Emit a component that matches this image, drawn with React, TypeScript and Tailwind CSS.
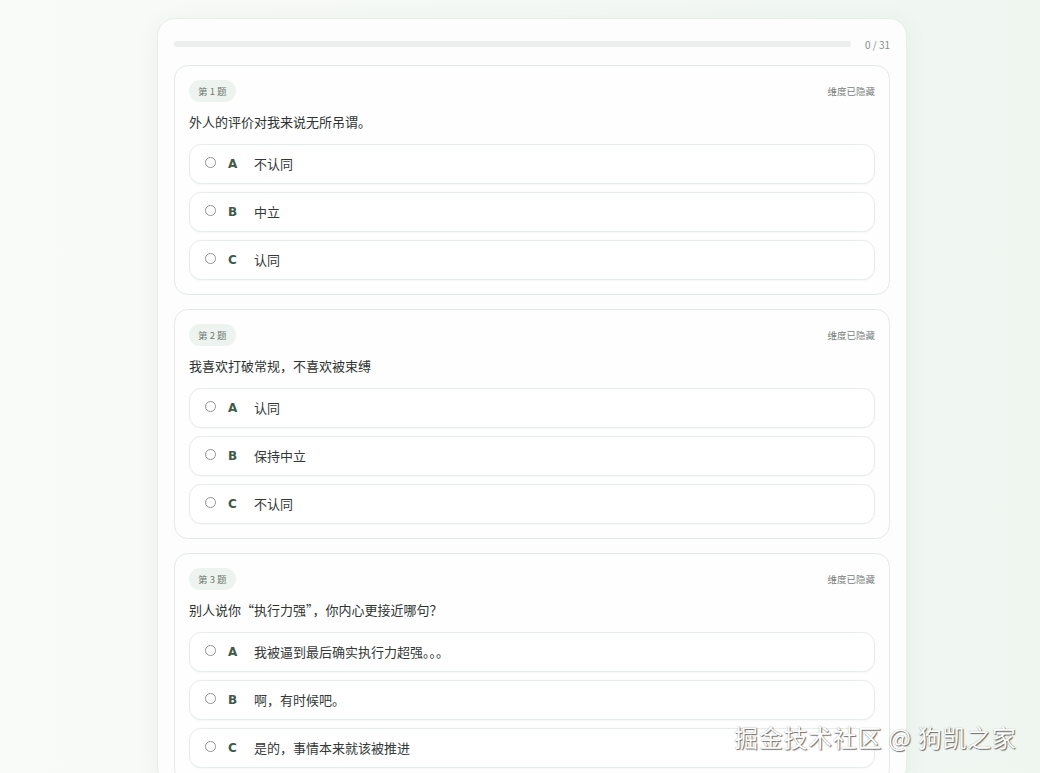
import React from "react";

type Q = { no: number; text: string; options: string[] };

const questions: Q[] = [
  { no: 1, text: "外人的评价对我来说无所吊谓。", options: ["不认同", "中立", "认同"] },
  { no: 2, text: "我喜欢打破常规，不喜欢被束缚", options: ["认同", "保持中立", "不认同"] },
  {
    no: 3,
    text: "别人说你“执行力强”，你内心更接近哪句？",
    options: ["我被逼到最后确实执行力超强。。。", "啊，有时候吧。", "是的，事情本来就该被推进"],
  },
];

const letters = ["A", "B", "C"];

function Option({ letter, text }: { letter: string; text: string }) {
  return (
    <div className="flex h-[40px] items-center rounded-[12px] border border-[#e6ece7] bg-white pl-[15px] shadow-[0_1px_2px_rgba(0,0,0,0.03)]">
      <span className="mb-[3px] h-[11px] w-[11px] rounded-full border border-[#8f9691] bg-white" />
      <span className="ml-[12px] w-[14px] text-[12px] font-bold text-[#3f5a48] [font-family:'DejaVu_Sans','Liberation_Sans',sans-serif]">
        {letter}
      </span>
      <span className="ml-[12px] text-[13px] text-[#333836]">{text}</span>
    </div>
  );
}

function Card({ q }: { q: Q }) {
  return (
    <div className="flex flex-col rounded-[14px] border border-[#e4ebe5] bg-[#fdfefd] px-[14px] pb-[14px] pt-[14px]">
      <div className="flex items-center justify-between">
        <span className="flex h-[22px] items-center rounded-full bg-[#edf3ee] px-[9px] text-[9.5px] text-[#6f7a73]">
          第 {q.no} 题
        </span>
        <span className="text-[9.5px] text-[#7b807d]">维度已隐藏</span>
      </div>
      <div className="mt-[10px] h-[20px] text-[13px] leading-[20px] text-[#2f3431]">{q.text}</div>
      <div className="mt-[12px] flex flex-col gap-[8px]">
        {q.options.map((o, i) => (
          <Option key={i} letter={letters[i]} text={o} />
        ))}
      </div>
    </div>
  );
}

export default function App() {
  return (
    <div className="relative h-[773px] w-[1040px] overflow-hidden bg-[linear-gradient(90deg,#f8fbf8_0%,#f5f9f5_40%,#eff6f0_100%)] [font-family:'Noto_Sans_CJK_SC','Noto_Sans',sans-serif]">
      <div className="ml-[157px] mt-[18px] w-[750px] rounded-[18px] border border-[#e8eee9] bg-[#fcfdfc] px-[16px] pt-[17px] shadow-[0_4px_24px_rgba(60,90,70,0.06)]">
        <div className="flex h-[16px] items-center">
          <div className="h-[6px] flex-1 rounded-full bg-[#ebeeec]" />
          <span className="ml-[14px] text-[10px] text-[#8a918c]">0 / 31</span>
        </div>
        <div className="mt-[13px] flex flex-col gap-[14px]">
          {questions.map((q) => (
            <Card key={q.no} q={q} />
          ))}
        </div>
      </div>
      <div className="absolute left-[734px] top-[722px] text-[24px] leading-[30px] tracking-[0.7px] text-white [text-shadow:1px_1px_1px_rgba(0,0,0,0.55),0_0_1px_rgba(0,0,0,0.4)]">
        掘金技术社区 @ 狗凯之家
      </div>
    </div>
  );
}
